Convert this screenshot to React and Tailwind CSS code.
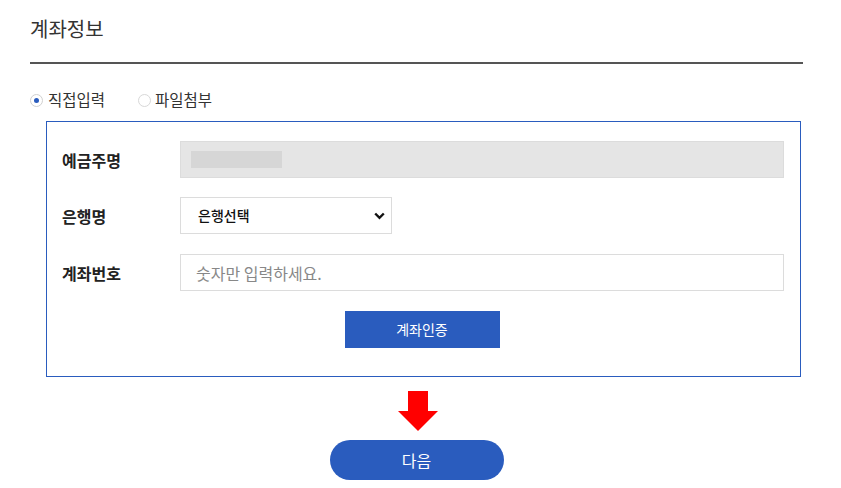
import React from "react";

export default function App() {
  return (
    <div
      className="w-[841px] h-[488px] bg-white text-[#333] overflow-hidden"
      style={{ fontFamily: '"Noto Sans CJK KR", "Noto Sans", sans-serif' }}
    >
      <div className="pl-[30px] w-[803px]">
        <div className="pt-[15px] h-[62px] text-[20px] leading-[28px] text-[#333]">계좌정보</div>
        <div className="h-[2px] bg-[#555]"></div>
        <div className="flex items-center h-[57px] pt-[15px] text-[15.5px] text-[#333]">
          <label className="flex items-center mr-[33px]">
            <span className="w-[13px] h-[13px] rounded-full border border-[#d0d0d0] flex items-center justify-center mr-[5px]">
              <span className="w-[5px] h-[5px] rounded-full bg-[#2a5cbe]"></span>
            </span>
            <span>직접입력</span>
          </label>
          <label className="flex items-center">
            <span className="w-[13px] h-[13px] rounded-full border border-[#d8d8d8] mr-[4px]"></span>
            <span>파일첨부</span>
          </label>
        </div>
        <div className="ml-[16px] w-[755px] border border-[#2a5cbe] pt-[19px] pb-[28px] pl-[15px] pr-[16px]">
          <div className="flex items-center h-[37px]">
            <div className="w-[118px] text-[16px] font-bold text-[#222]">예금주명</div>
            <div className="flex-1 h-[37px] bg-[#e5e5e5] border border-[#dcdcdc] flex items-center pl-[10px]">
              <div className="w-[91px] h-[17px] bg-[#d6d6d6]"></div>
            </div>
          </div>
          <div className="flex items-center h-[37px] mt-[19px]">
            <div className="w-[118px] text-[16px] font-bold text-[#222]">은행명</div>
            <div className="w-[212px] h-[37px] bg-white border border-[#dcdcdc] flex items-center justify-between pl-[17px] pr-[6px]">
              <span className="text-[14px] font-medium text-[#111]">은행선택</span>
              <svg width="11" height="8" viewBox="0 0 11 8">
                <path d="M1.2 1.5 L5.5 5.8 L9.8 1.5" fill="none" stroke="#111" strokeWidth="2.4" />
              </svg>
            </div>
          </div>
          <div className="flex items-center h-[37px] mt-[20px]">
            <div className="w-[118px] text-[16px] font-bold text-[#222]">계좌번호</div>
            <div className="flex-1 h-[37px] bg-white border border-[#dcdcdc] flex items-center pl-[15px]">
              <span className="text-[16px] text-[#888]">숫자만 입력하세요.</span>
            </div>
          </div>
          <div className="flex justify-center mt-[20px] pr-[2px]">
            <div className="w-[155px] h-[37px] bg-[#2a5cbe] text-white text-[14px] flex items-center justify-center">
              계좌인증
            </div>
          </div>
        </div>
        <div className="flex justify-center mt-[14px] pl-[3px]">
          <svg width="40" height="40" viewBox="0 0 40 40">
            <path d="M10 0 H30 V20 H40 L20 40 L0 20 H10 Z" fill="#ff0000" />
          </svg>
        </div>
        <div className="flex justify-center mt-[9px]">
          <div className="w-[174px] h-[40px] rounded-full bg-[#2a5cbe] text-white text-[16px] flex items-center justify-center">
            다음
          </div>
        </div>
      </div>
    </div>
  );
}
